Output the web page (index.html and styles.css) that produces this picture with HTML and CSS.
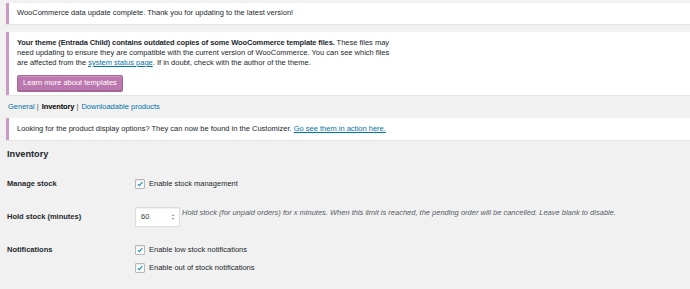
FILE: index.html
```html
<!DOCTYPE html>
<html lang="en">

<head>
  <meta charset="UTF-8">
  <title>WooCommerce Settings - Inventory</title>
  <link rel="stylesheet" href="styles.css">
</head>

<body>
  <div class="wrap">
    <!-- Update notice -->
    <div class="notice notice-short">
      <p>WooCommerce data update complete. Thank you for updating to the latest version!</p>
    </div>

    <!-- Template notice -->
    <div class="notice notice-theme">
      <p><strong>Your theme (Entrada Child) contains outdated copies of some WooCommerce template files.</strong> These files may need updating to ensure they are compatible with the current version of WooCommerce. You can see which files are affected from the <a href="#">system status page</a>. If in doubt, check with the author of the theme.</p>
      <div class="notice-actions">
        <a class="button-primary" href="#">Learn more about templates</a>
      </div>
    </div>

    <!-- Sub tabs -->
    <ul class="subsubsub">
      <li><a href="#">General</a> |</li>
      <li><span class="current">Inventory</span> |</li>
      <li><a href="#">Downloadable products</a></li>
    </ul>

    <div class="notice notice-short notice-info">
      <p>Looking for the product display options? They can now be found in the Customizer. <a href="#">Go see them in action here.</a></p>
    </div>

    <h2 class="section-title">Inventory</h2>

    <div class="form-table">
      <div class="form-row row-manage">
        <div class="form-label">Manage stock</div>
        <div class="form-field">
          <label class="check"><span class="checkbox"><svg viewBox="0 0 10 10"><path d="M2.2 5.1 L4.2 7.1 L7.9 2.6" /></svg></span>Enable stock management</label>
        </div>
      </div>

      <div class="form-row row-hold">
        <div class="form-label">Hold stock (minutes)</div>
        <div class="form-field field-inline">
          <div class="number-input">
            <span>60</span>
            <svg class="spin" viewBox="0 0 6 10"><path d="M1.5 4 L3 2.3 L4.5 4 Z M1.5 6 L3 7.7 L4.5 6 Z" /></svg>
          </div>
          <span class="description">Hold stock (for unpaid orders) for x minutes. When this limit is reached, the pending order will be cancelled. Leave blank to disable.</span>
        </div>
      </div>

      <div class="form-row row-notify">
        <div class="form-label">Notifications</div>
        <div class="form-field field-stack">
          <label class="check"><span class="checkbox"><svg viewBox="0 0 10 10"><path d="M2.2 5.1 L4.2 7.1 L7.9 2.6" /></svg></span>Enable low stock notifications</label>
          <label class="check"><span class="checkbox"><svg viewBox="0 0 10 10"><path d="M2.2 5.1 L4.2 7.1 L7.9 2.6" /></svg></span>Enable out of stock notifications</label>
        </div>
      </div>
    </div>
  </div>
</body>

</html>
```

FILE: styles.css
```css
* {
  margin: 0;
  padding: 0;
  box-sizing: border-box;
}

html, body {
  width: 100%;
  height: 100%;
  overflow: hidden;
}

body {
  background-color: #f1f1f1;
  font-family: "Liberation Sans", Arial, sans-serif;
  font-size: 7.5px;
  line-height: 10px;
  color: #23282d;
}

a {
  color: #0073aa;
}

strong {
  letter-spacing: -0.13px;
}

.wrap {
  padding: 3px 0 0 6px;
}

/* Notices */
.notice {
  background: #fff;
  border-left: 3px solid #cc99c2;
  box-shadow: 0 1px 1px rgba(0, 0, 0, 0.05);
  padding: 0 8px;
}

.notice-short p {
  padding: 5px 0 6px;
}

.notice-theme {
  margin-top: 8px;
  padding-top: 6px;
  padding-bottom: 4px;
}

.notice-theme p {
  max-width: 378px;
}

.notice-actions {
  margin-top: 7px;
  display: flex;
}

.button-primary {
  display: inline-block;
  height: 16px;
  line-height: 14px;
  padding: 0 5px;
  background: #bb77ae;
  border: 1px solid #a36597;
  border-radius: 2px;
  box-shadow: inset 0 1px 0 #cc99c2, 0 1px 0 #a36597;
  color: #fff;
  text-decoration: none;
}

/* Sub tabs */
.subsubsub {
  list-style: none;
  display: flex;
  gap: 3px;
  margin: 7px 0 6px 2px;
  color: #555;
}

.subsubsub a {
  text-decoration: none;
}

.subsubsub .current {
  font-weight: bold;
  letter-spacing: -0.13px;
  color: #000;
}

.notice-info p {
  padding: 6px 0 6px;
}

/* Form */
.section-title {
  font-size: 9.2px;
  line-height: 12px;
  margin: 8px 0 0 1px;
  color: #23282d;
}

.form-row {
  display: flex;
  align-items: flex-start;
}

.form-label {
  width: 128px;
  padding-left: 1px;
  font-weight: bold;
  line-height: 12px;
}

.row-manage {
  margin-top: 18px;
}

.row-hold {
  margin-top: 17px;
}

.row-hold .form-label {
  padding-top: 4px;
}

.row-notify {
  margin-top: 17px;
}

.field-inline {
  display: flex;
  align-items: flex-start;
}

.field-stack {
  display: flex;
  flex-direction: column;
  gap: 6px;
}

.check {
  display: flex;
  align-items: center;
  height: 12px;
  line-height: 12px;
}

.checkbox {
  width: 10px;
  height: 10px;
  margin: 0 4px 0 1px;
  background: #fff;
  border: 1px solid #b4b9be;
  border-radius: 1px;
  box-shadow: inset 0 1px 2px rgba(0, 0, 0, 0.1);
  display: flex;
}

.checkbox svg {
  width: 100%;
  height: 100%;
  fill: none;
  stroke: #1e8cbe;
  stroke-width: 1.4;
}

.number-input {
  width: 45px;
  height: 20px;
  margin-left: 1px;
  background: #fff;
  border: 1px solid #ddd;
  box-shadow: inset 0 1px 2px rgba(0, 0, 0, 0.07);
  display: flex;
  align-items: center;
  justify-content: space-between;
  padding: 0 3px 0 5px;
  color: #32373c;
}

.number-input .spin {
  width: 6px;
  height: 10px;
  fill: #999;
}

.description {
  font-style: italic;
  color: #555d66;
  margin-left: 2px;
  line-height: 12px;
}
```
